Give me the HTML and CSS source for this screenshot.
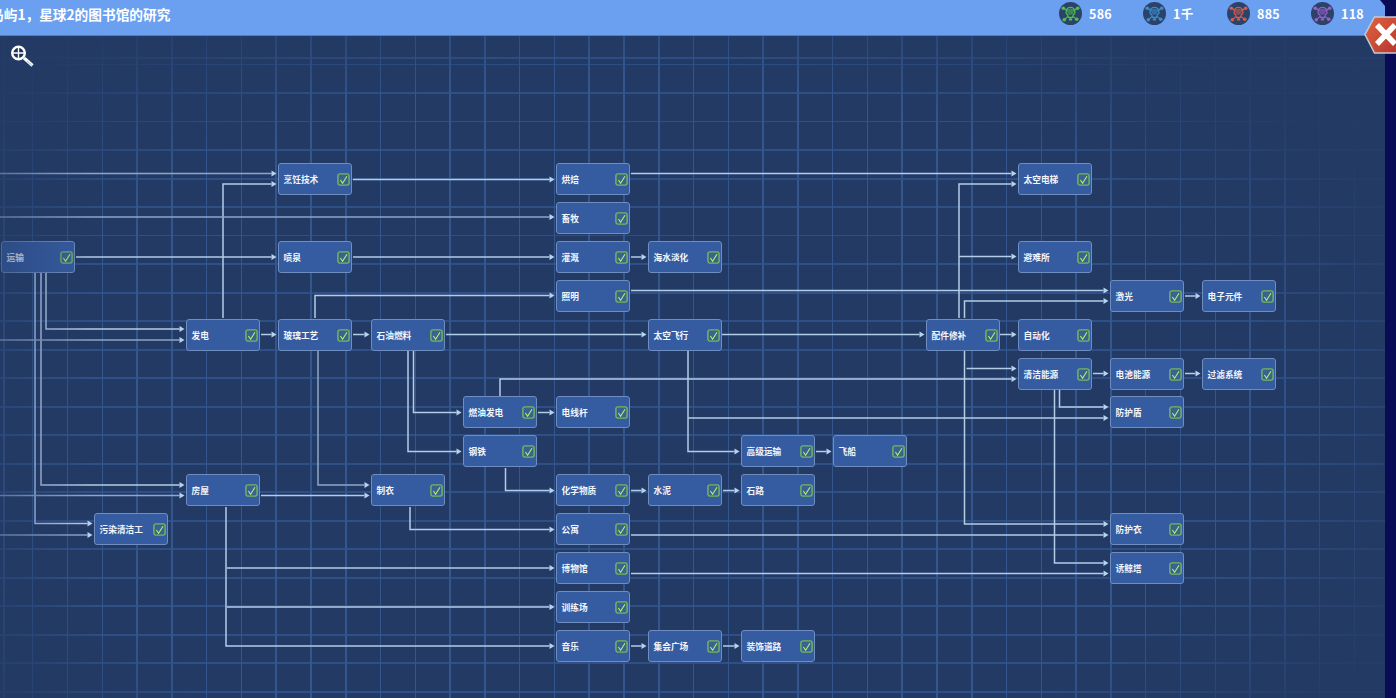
FILE: index.html
```html
<!DOCTYPE html>
<html lang="zh">
<head>
    <meta charset="utf-8">
    <title>图书馆的研究</title>
    <link rel="stylesheet" href="styles.css">
</head>
<body>
    <svg class="defs" width="0" height="0">
        <symbol id="res-icon" viewBox="0 0 24 24">
            <g fill="none" stroke="currentColor" stroke-width="1.2">
                <path d="M9 9L4.500 6.500M15 9L19.500 6.500M9.500 15L5.500 18.500M14.500 15L18.500 18"/>
                <path d="M12 5.500a4.600 4.600 0 0 1 2.600 8.400l-.4 2.100h-4.400l-.4-2.100A4.600 4.600 0 0 1 12 5.500z"/>
            </g>
            <g fill="currentColor">
                <circle cx="4.500" cy="6.500" r="1.900"/>
                <circle cx="19.500" cy="6.500" r="1.900"/>
                <circle cx="5.500" cy="18.500" r="1.900"/>
                <circle cx="18.500" cy="18" r="1.900"/>
                <circle cx="12" cy="10" r="3.300" opacity=".55"/>
                <rect x="10.300" y="17" width="3.400" height="2.300" rx=".6"/>
            </g>
        </symbol>
    </svg>

    <div class="window">
        <div class="topbar">
            <div class="title">岛屿1，星球2的图书馆的研究</div>
            <div class="resources">
                <div class="res"><span class="res-icon res-green"><svg><use href="#res-icon"/></svg></span>586</div>
                <div class="res"><span class="res-icon res-blue"><svg><use href="#res-icon"/></svg></span>1千</div>
                <div class="res"><span class="res-icon res-red"><svg><use href="#res-icon"/></svg></span>885</div>
                <div class="res"><span class="res-icon res-purple"><svg><use href="#res-icon"/></svg></span>118</div>
            </div>
        </div>

        <div class="canvas" id="canvas">
            <div class="grid"></div>
            <svg class="wires" id="wires" viewBox="0 36 1385 662"></svg>
            <div class="edge-fade"></div>
            <svg class="zoom-icon" viewBox="0 0 26 24">
                <circle cx="9.500" cy="9" r="6.300" fill="#1d3057" stroke="#fff" stroke-width="2.400"/>
                <path d="M9.500 3.500V14.500M4 9H15" stroke="#fff" stroke-width="1.400"/>
                <path d="M15 14L23.500 21.500" stroke="#fff" stroke-width="3.200"/>
                <path d="M18 17L23 21.500" stroke="#c9ced8" stroke-width="1.200"/>
            </svg>
        </div>

        <svg class="close-btn" viewBox="0 0 34 38">
            <defs>
                <linearGradient id="closeFill" x1="0" y1="0" x2="1" y2="1">
                    <stop offset="0" stop-color="#e0643f"/>
                    <stop offset="1" stop-color="#b5362f"/>
                </linearGradient>
            </defs>
            <polygon points="1,18.500 10.500,1 34,1 34,37 10.500,37" fill="url(#closeFill)" stroke="#c3ccd6" stroke-width="1.500"/>
            <path d="M13 9L31 28M31 9L13 28" stroke="#fff" stroke-width="5.500"/>
        </svg>
    </div>

    <script src="script.js"></script>
</body>
</html>
```

FILE: styles.css
```css
html, body
{
    margin: 0;
    height: 100%;
    overflow: hidden;
    background-color: #0a0b55;
}
.defs
{
    position: absolute;
}
.window
{
    position: relative;
    width: 1385px;
    height: 698px;
    display: flex;
    flex-direction: column;
    font-family: "Noto Sans CJK SC", "Noto Sans", sans-serif;
}
.topbar
{
    height: 35px;
    flex: none;
    display: flex;
    justify-content: space-between;
    background-color: #6ba0f1;
    border-bottom: 1px solid #5080c4;
    color: white;
    font-weight: bold;
    clip-path: polygon(0 0, 1380px 0, 100% 6px, 100% 100%, 0 100%);
}
.title
{
    margin: 4px 0 0 -10px;
    font-size: 13.700px;
    line-height: 20px;
    white-space: nowrap;
}
.resources
{
    display: flex;
    padding: 2px 0 0 0;
    margin-right: 16px;
}
.res
{
    width: 84px;
    display: flex;
    gap: 7px;
    font-size: 12.500px;
    line-height: 24px;
    letter-spacing: .3px;
}
.res:last-child
{
    width: 58px;
}
.res-icon
{
    width: 23px;
    height: 23px;
    border-radius: 50%;
    background-color: #2c4268;
    display: block;
    flex: none;
}
.res-icon svg
{
    display: block;
    width: 23px;
    height: 23px;
}
.res-green { color: #4cc24a; }
.res-blue { color: #3a8fd2; }
.res-red { color: #d85c48; }
.res-purple { color: #9a60cc; }

.canvas
{
    position: relative;
    flex: 1;
    overflow: hidden;
    background-color: #233a65;
}
.grid
{
    position: absolute;
    inset: 0;
    background-image:
        repeating-linear-gradient(90deg, #33568f 0, #33568f 1.500px, transparent 1.500px, transparent 34.780px),
        repeating-linear-gradient(180deg, #2f5086 0, #2f5086 1.500px, transparent 1.500px, transparent 28.500px);
    background-position: 32px 0, 0 28px;
    -webkit-mask-image: radial-gradient(ellipse 62% 72% at 45% 58%, #000 72%, rgba(0,0,0,.12) 100%);
    mask-image: radial-gradient(ellipse 62% 72% at 45% 58%, #000 72%, rgba(0,0,0,.12) 100%);
}
.wires
{
    position: absolute;
    left: 0;
    top: 0;
    width: 1385px;
    height: 662px;
}
.wires polyline
{
    fill: none;
    stroke: #b3cde9;
    stroke-width: 1.500;
}
.wires polyline.dim
{
    stroke: #8ea6c8;
}
.wires polygon
{
    fill: #b5d4f0;
}
.node
{
    position: absolute;
    width: 74px;
    height: 32px;
    box-sizing: border-box;
    padding-left: 4.500px;
    display: flex;
    align-items: center;
    justify-content: space-between;
    background-color: #355ba0;
    border: 1px solid #6f8dbf;
    border-radius: 3px;
    color: #f2f5fa;
    font-size: 8.700px;
    font-weight: bold;
    white-space: nowrap;
}
.check
{
    width: 13px;
    height: 13px;
    margin-right: 1px;
    display: block;
    flex: none;
}
.edge-fade
{
    position: absolute;
    left: 0;
    top: 0;
    bottom: 0;
    width: 90px;
    background: linear-gradient(90deg, rgba(35,58,101,.45), rgba(35,58,101,0));
    pointer-events: none;
}
.zoom-icon
{
    position: absolute;
    left: 9px;
    top: 8px;
    width: 26px;
    height: 24px;
}
.close-btn
{
    position: absolute;
    left: 1364px;
    top: 16px;
    width: 34px;
    height: 38px;
}
```

FILE: script.js
```js
var SVG_NS = "http://www.w3.org/2000/svg";

var columns = [1, 94, 186, 278, 371, 463, 556, 648, 741, 833, 926, 1018, 1110, 1202];

// name, column, row
var nodes = [
    ["烹饪技术", 3, 0], ["烘焙", 6, 0], ["太空电梯", 11, 0],
    ["畜牧", 6, 1],
    ["运输", 0, 2], ["喷泉", 3, 2], ["灌溉", 6, 2], ["海水淡化", 7, 2], ["避难所", 11, 2],
    ["照明", 6, 3], ["激光", 12, 3], ["电子元件", 13, 3],
    ["发电", 2, 4], ["玻璃工艺", 3, 4], ["石油燃料", 4, 4], ["太空飞行", 7, 4], ["配件修补", 10, 4], ["自动化", 11, 4],
    ["清洁能源", 11, 5], ["电池能源", 12, 5], ["过滤系统", 13, 5],
    ["燃油发电", 5, 6], ["电线杆", 6, 6], ["防护盾", 12, 6],
    ["钢铁", 5, 7], ["高级运输", 8, 7], ["飞船", 9, 7],
    ["房屋", 2, 8], ["制衣", 4, 8], ["化学物质", 6, 8], ["水泥", 7, 8], ["石路", 8, 8],
    ["污染清洁工", 1, 9], ["公寓", 6, 9], ["防护衣", 12, 9],
    ["博物馆", 6, 10], ["诱鲸塔", 12, 10],
    ["训练场", 6, 11],
    ["音乐", 6, 12], ["集会广场", 7, 12], ["装饰道路", 8, 12]
];

// points of each wire, the last point is the left edge of the target box
var wires = [
    [[0, 173.5], [278, 173.5]],
    [[223, 318], [223, 184], [278, 184]],
    [[353, 179.5], [556, 179.5]],
    [[631, 173.5], [1018, 173.5]],
    [[959, 318], [959, 184], [1018, 184]],
    [[959, 256.5], [1018, 256.5]],
    [[0, 217], [556, 217]],
    [[76, 257], [278, 257]],
    [[353, 257], [556, 257]],
    [[631, 257], [648, 257]],
    [[631, 290.5], [1110, 290.5]],
    [[315, 318], [315, 295.5], [556, 295.5]],
    [[964.5, 318], [964.5, 301], [1110, 301]],
    [[1185, 296], [1202, 296]],
    [[46, 273], [46, 329], [186, 329]],
    [[41, 273], [41, 485], [186, 485]],
    [[35, 273], [35, 523.5], [94, 523.5]],
    [[0, 340], [186, 340]],
    [[0, 495.5], [186, 495.5]],
    [[0, 535], [94, 535]],
    [[261, 334.5], [278, 334.5]],
    [[353, 334.5], [371, 334.5]],
    [[446, 334.5], [648, 334.5]],
    [[722, 334.5], [926, 334.5]],
    [[1000, 334.5], [1018, 334.5]],
    [[964.5, 351], [964.5, 524], [1110, 524]],
    [[966.5, 368.5], [1018, 368.5]],
    [[500, 396], [500, 379], [1018, 379]],
    [[1093, 373.5], [1110, 373.5]],
    [[1185, 373.5], [1202, 373.5]],
    [[1054.5, 390], [1054.5, 563], [1110, 563]],
    [[1059.5, 390], [1059.5, 407], [1110, 407]],
    [[688, 351], [688, 451.5], [741, 451.5]],
    [[688, 418], [1110, 418]],
    [[816, 451.5], [833, 451.5]],
    [[408, 351], [408, 451.5], [463, 451.5]],
    [[413.5, 351], [413.5, 412.5], [463, 412.5]],
    [[538, 412.5], [556, 412.5]],
    [[318, 351], [318, 485], [371, 485]],
    [[261, 495.5], [371, 495.5]],
    [[505.5, 468], [505.5, 490.5], [556, 490.5]],
    [[631, 490.5], [648, 490.5]],
    [[723, 490.5], [741, 490.5]],
    [[410, 507], [410, 529.5], [556, 529.5]],
    [[631, 535], [1110, 535]],
    [[226, 507], [226, 646], [556, 646]],
    [[227, 568], [556, 568]],
    [[227, 607], [556, 607]],
    [[631, 573.5], [1110, 573.5]],
    [[631, 646], [648, 646]],
    [[723, 646], [741, 646]]
];

var dimWires = [0, 6, 17, 18, 19, 38];

function drawWires() {
    var svg = document.getElementById("wires");
    for (var i = 0; i < wires.length; i++) {
        var pts = wires[i].slice();
        var end = pts[pts.length - 1];
        var tip = end[0] - 1.5;
        pts[pts.length - 1] = [tip - 5, end[1]];

        var line = document.createElementNS(SVG_NS, "polyline");
        line.setAttribute("points", pts.join(" "));
        if (dimWires.indexOf(i) >= 0) {
            line.setAttribute("class", "dim");
        }
        svg.appendChild(line);

        var head = document.createElementNS(SVG_NS, "polygon");
        head.setAttribute("points", (tip - 5) + "," + (end[1] - 3) + " " + tip + "," + end[1] + " " + (tip - 5) + "," + (end[1] + 3));
        svg.appendChild(head);
    }
}

var checkSvg = '<svg class="check" viewBox="0 0 13 13">' +
    '<rect x=".9" y=".9" width="11.2" height="11.2" rx="2" fill="#3a6390" stroke="#73b85e" stroke-width="1.4"/>' +
    '<path d="M3.4 7L5.6 10.3L10 3.2" fill="none" stroke="#b6ee78" stroke-width="1.1"/>' +
    '</svg>';

function drawNodes() {
    var canvas = document.getElementById("canvas");
    var fade = canvas.querySelector(".edge-fade");
    for (var i = 0; i < nodes.length; i++) {
        var box = document.createElement("div");
        box.className = "node";
        box.style.left = columns[nodes[i][1]] + "px";
        box.style.top = Math.round(163 + 38.9 * nodes[i][2] - 36) + "px";
        box.innerHTML = "<span>" + nodes[i][0] + "</span>" + checkSvg;
        canvas.insertBefore(box, fade);
    }
}

drawWires();
drawNodes();
```
